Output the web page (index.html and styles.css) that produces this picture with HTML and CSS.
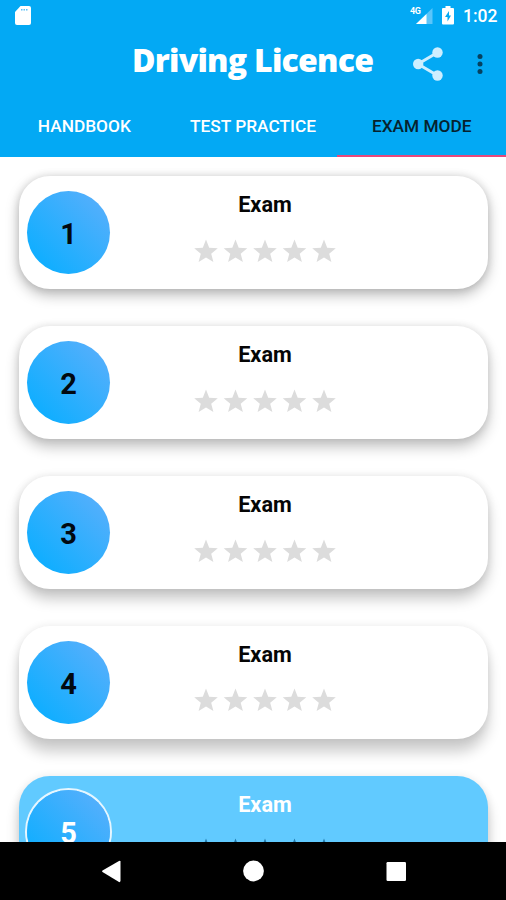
FILE: index.html
```html
<!DOCTYPE html>
<html lang="en">
<head>
<meta charset="utf-8">
<title>Driving Licence</title>
<link rel="stylesheet" href="styles.css">
</head>
<body>
<svg width="0" height="0" class="defs">
  <symbol id="stars" viewBox="0 0 142 24">
    <g id="row">
      <path id="star" d="M12 .5l3.200 8.200 8.600.5-6.600 5.500 2.200 8.400-7.400-4.500-7.400 4.500 2.200-8.400L.2 9.200l8.600-.5z"/>
      <use href="#star" x="29.500"/><use href="#star" x="59"/><use href="#star" x="88.500"/><use href="#star" x="118"/>
    </g>
  </symbol>
</svg>
<div class="screen">
  <header class="header">
    <div class="status">
      <svg class="sd" width="16" height="20" viewBox="0 0 16 20"><path d="M5.500 0H14q2 0 2 2v15q0 2-2 2H2q-2 0-2-2V6z" fill="#fff"/><path d="M6 3h1.500v1.500H6zm2.500 0H10v1.500H8.500zm2.500 0h1.500v1.500H11z" fill="#58bff8"/></svg>
      <div class="right">
        <svg width="24" height="20" viewBox="0 0 24 20"><path d="M22.500 2v16H6z" fill="#5bc5fa"/><path d="M16.500 8v10H6z" fill="#fff"/><text x="0" y="8" class="net">4G</text></svg>
        <svg class="battery" width="12" height="19" viewBox="0 0 12 19"><path d="M3.500 0h5v2H11q1 0 1 1v14.500q0 1-1 1H1q-1 0-1-1V3q0-1 1-1h2.500z" fill="#fff"/><path d="M7 5L3 11h2.500v4.500L9 9.500H7z" fill="#03a9f4"/></svg>
        <span class="time">1:02</span>
      </div>
    </div>
    <div class="bar">
      <h1>Driving Licence</h1>
      <svg class="share" width="30" height="34" viewBox="0 0 30 34"><path d="M24.500 5.500L5 17l19.500 11.500" fill="none" stroke="#cdeeff" stroke-width="3"/><g fill="#cdeeff"><circle cx="24.500" cy="5.500" r="5.200"/><circle cx="5.200" cy="17" r="5.200"/><circle cx="24.500" cy="28.500" r="5.200"/></g></svg>
      <svg class="more" width="6" height="22" viewBox="0 0 6 22"><g fill="#06415f"><circle cx="3" cy="3.500" r="2.500"/><circle cx="3" cy="11" r="2.500"/><circle cx="3" cy="18.500" r="2.500"/></g></svg>
    </div>
    <nav class="tabs">
      <div class="tab">HANDBOOK</div>
      <div class="tab">TEST PRACTICE</div>
      <div class="tab active">EXAM MODE</div>
    </nav>
  </header>
  <main class="list">
    <section class="card s1"><div class="num">1</div><div class="info"><h2>Exam</h2><svg class="stars"><use href="#stars"/></svg></div></section>
    <section class="card s2"><div class="num">2</div><div class="info"><h2>Exam</h2><svg class="stars"><use href="#stars"/></svg></div></section>
    <section class="card s3"><div class="num">3</div><div class="info"><h2>Exam</h2><svg class="stars"><use href="#stars"/></svg></div></section>
    <section class="card s4"><div class="num">4</div><div class="info"><h2>Exam</h2><svg class="stars"><use href="#stars"/></svg></div></section>
    <section class="card s4 selected"><div class="num">5</div><div class="info"><h2>Exam</h2><svg class="stars"><use href="#stars"/></svg></div></section>
  </main>
  <footer class="nav">
    <svg width="506" height="58" viewBox="0 0 506 58" fill="#fff"><path d="M119 19q1-.5 1.500.5v19.500q-.5 1.500-1.500 1l-16.500-10q-1-.8 0-1.500z"/><circle cx="253.500" cy="29" r="10.400"/><rect x="386.500" y="20" width="19.500" height="19" rx="1.200"/></svg>
  </footer>
</div>
</body>
</html>
```

FILE: styles.css
```css
* { box-sizing: border-box; }
body { margin: 0; font-family: Roboto, "Liberation Sans", sans-serif; background: #fff; }
.defs { display: block; }
.screen { height: 900px; width: 506px; display: flex; flex-direction: column; overflow: hidden; }
.header { flex: none; height: 157px; background: #03a9f4; color: #fff; display: flex; flex-direction: column; }
.status { height: 32px; display: flex; justify-content: space-between; padding: 6px 9px 0 15px; }
.right { display: flex; align-items: flex-start; }
.battery { margin-left: 8px; }
.net { font: 700 9px Roboto, sans-serif; letter-spacing: -.5px; fill: #fff; }
.time { font-size: 17.500px; font-weight: 500; line-height: 20px; width: 34px; margin-left: 9px; white-space: nowrap; }
.bar { height: 64px; display: flex; align-items: center; padding-left: 132px; }
h1 { margin: 0; width: 281px; font: 800 32px/44px "Open Sans", sans-serif; white-space: nowrap; letter-spacing: -.75px; padding-bottom: 8px; }
.more { margin-left: 34px; }
.tabs { flex: 1; display: flex; }
.tab { width: 168.700px; font-size: 17.300px; font-weight: 500; line-height: 20px; padding-top: 20px; text-align: center; white-space: nowrap; }
.tab.active { color: #06222e; border-bottom: 2px solid #e8487c; }
.list { flex: 1; min-height: 0; overflow: hidden; padding: 19.400px 18.500px 0 19px; display: flex; flex-direction: column; gap: 36.820px; }
.card { flex: none; height: 113px; border-radius: 31px; background: #fff; display: flex; padding: 14.700px 0 0 8px; }
.s1 { box-shadow: 0 6px 14px rgba(0,0,0,.27), 0 0 9px rgba(0,0,0,.12); }
.s2 { box-shadow: 0 8px 14px rgba(0,0,0,.24), 0 0 9px rgba(0,0,0,.11); }
.s3 { box-shadow: 0 10px 14px rgba(0,0,0,.22), 0 0 9px rgba(0,0,0,.10); }
.s4 { box-shadow: 0 13px 14px rgba(0,0,0,.20), 0 0 9px rgba(0,0,0,.09); }
.num { width: 83px; height: 83px; border-radius: 50%; background: linear-gradient(45deg, #10aeff 15%, #51affc 85%); color: #020910; font-size: 29px; font-weight: 700; line-height: 86px; text-align: center; }
.info { width: 142px; margin-left: 84px; display: flex; flex-direction: column; align-items: center; }
h2 { margin: 1.300px 0 0; font-size: 21.700px; font-weight: 700; line-height: 25px; color: #050505; }
.stars { width: 142px; height: 24px; margin-top: 21.500px; fill: #dcdcdc; }
.selected { background: #61caff; }
.selected .num { color: #fff; box-shadow: 0 0 0 2px #e6f6ff; }
.selected h2 { color: #fff; }
.selected .stars { fill: #247aac; }
.nav { flex: none; height: 58px; background: #000; }
.nav svg { display: block; }
```
